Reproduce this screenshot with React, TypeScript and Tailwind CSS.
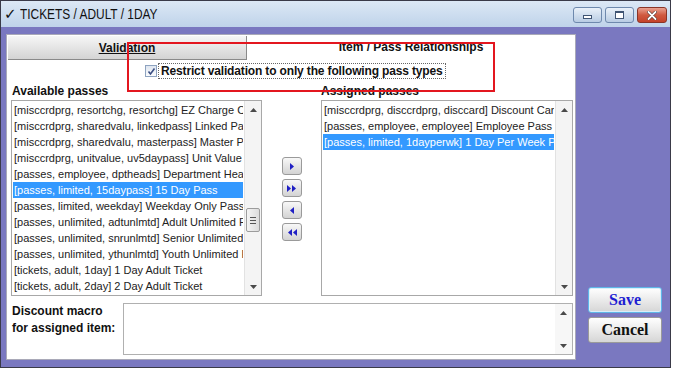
import React from "react";

const leftItems = [
  "[misccrdprg, resortchg, resortchg] EZ Charge Card",
  "[misccrdprg, sharedvalu, linkedpass] Linked Pass",
  "[misccrdprg, sharedvalu, masterpass] Master Pass",
  "[misccrdprg, unitvalue, uv5daypass] Unit Value 5 Day Pass",
  "[passes, employee, dptheads] Department Heads",
  "[passes, limited, 15daypass] 15 Day Pass",
  "[passes, limited, weekday] Weekday Only Pass",
  "[passes, unlimited, adtunlmtd] Adult Unlimited Pass",
  "[passes, unlimited, snrunlmtd] Senior Unlimited Pass",
  "[passes, unlimited, ythunlmtd] Youth Unlimited Pass",
  "[tickets, adult, 1day] 1 Day Adult Ticket",
  "[tickets, adult, 2day] 2 Day Adult Ticket",
];

const rightItems = [
  "[misccrdprg, disccrdprg, disccard] Discount Card",
  "[passes, employee, employee] Employee Pass",
  "[passes, limited, 1dayperwk] 1 Day Per Week Pass",
];

function Tri({ dir, color = "#4a4a4a" }: { dir: "up" | "down"; color?: string }) {
  return (
    <svg width="7" height="4" viewBox="0 0 7 4">
      {dir === "up" ? (
        <path d="M0 4 L3.5 0 L7 4 Z" fill={color} />
      ) : (
        <path d="M0 0 L7 0 L3.5 4 Z" fill={color} />
      )}
    </svg>
  );
}

function Scrollbar({ thumb }: { thumb?: boolean }) {
  return (
    <div className="w-[17px] flex flex-col bg-[#f4f4f4] border-l border-[#e2e2e2]">
      <div className="h-[17px] flex items-center justify-center">
        <Tri dir="up" />
      </div>
      {thumb ? (
        <div className="mt-[90px] mx-[1px] h-[24px] rounded-[2px] border border-[#9c9c9c] bg-linear-to-r from-[#f4f4f4] to-[#dcdcdc] flex flex-col items-center justify-center gap-[2px]">
          <div className="w-[6px] h-px bg-[#555]" />
          <div className="w-[6px] h-px bg-[#555]" />
          <div className="w-[6px] h-px bg-[#555]" />
        </div>
      ) : null}
      <div className="flex-1" />
      <div className="h-[17px] flex items-center justify-center">
        <Tri dir="down" />
      </div>
    </div>
  );
}

function ListBox({
  items,
  selected,
  thumb,
  wide,
}: {
  items: string[];
  selected: number;
  thumb?: boolean;
  wide?: boolean;
}) {
  return (
    <div
      className={
        "h-full flex border border-[#a8a8a8] bg-white " + (wide ? "w-[252px]" : "w-[251px]")
      }
    >
      <div className="flex-1 min-w-0 overflow-hidden pt-px px-px">
        {items.map((t, i) => (
          <div
            key={i}
            className={
              "h-[16px] leading-[16px] pl-px whitespace-nowrap overflow-hidden text-[11px] " +
              (i === selected ? "bg-[#3399ff] text-white" : "text-[#222]")
            }
          >
            {t}
          </div>
        ))}
      </div>
      <Scrollbar thumb={thumb} />
    </div>
  );
}

function ArrowBtn({ kind }: { kind: "r" | "rr" | "l" | "ll" }) {
  const c = "#1f1fc4";
  return (
    <div className="w-[20px] h-[18px] rounded-[3px] border border-[#9a9a9a] bg-linear-to-b from-[#f8f8f8] to-[#d3d3d3] flex items-center justify-center">
      <svg width="10" height="7" viewBox="0 0 10 7">
        {kind === "r" && <path d="M3 0 L7 3.5 L3 7 Z" fill={c} />}
        {kind === "l" && <path d="M7 0 L3 3.5 L7 7 Z" fill={c} />}
        {kind === "rr" && (
          <>
            <path d="M0 0 L4 3.5 L0 7 Z" fill={c} />
            <path d="M5 0 L9 3.5 L5 7 Z" fill={c} />
          </>
        )}
        {kind === "ll" && (
          <>
            <path d="M5 0 L1 3.5 L5 7 Z" fill={c} />
            <path d="M10 0 L6 3.5 L10 7 Z" fill={c} />
          </>
        )}
      </svg>
    </div>
  );
}

export default function App() {
  return (
    <div className="w-[674px] h-[369px] bg-white font-['Liberation_Sans',Arial,sans-serif]">
      <div className="w-[671px] h-[368px] border border-[#3a3a48] flex flex-col">
        {/* Title bar */}
        <div className="h-[26px] bg-linear-to-b from-[#dce8f5] to-[#bfd3ea] flex items-center pl-[3px] pr-[3px]">
          <span className="text-[15px] text-[#111] font-['DejaVu_Sans',sans-serif] leading-none">✓</span>
          <span className="ml-[3px] inline-block origin-left scale-x-[0.85] text-[14px] text-[#111] leading-none whitespace-nowrap">
            TICKETS / ADULT / 1DAY
          </span>
          <div className="flex-1" />
          <div className="flex items-start gap-[3px] self-start mt-[6px]">
            <div className="w-[29px] h-[16px] rounded-[3px] border border-[#6e89ad] bg-linear-to-b from-[#eaf1f9] to-[#b8cce3] flex items-end justify-center pb-[3px]">
              <div className="w-[9px] h-[4px] bg-white border border-[#3f5472]" />
            </div>
            <div className="w-[29px] h-[16px] rounded-[3px] border border-[#6e89ad] bg-linear-to-b from-[#eaf1f9] to-[#b8cce3] flex items-center justify-center">
              <div className="w-[9px] h-[8px] bg-white border border-[#3f5472] border-t-2" />
            </div>
            <div className="w-[30px] h-[16px] rounded-[3px] border border-[#8a3527] bg-linear-to-b from-[#e8a190] via-[#d05a40] to-[#c4432b] flex items-center justify-center">
              <svg width="10" height="9" viewBox="0 0 10 9">
                <path d="M1.5 1 L8.5 8 M8.5 1 L1.5 8" stroke="#3a1a14" strokeWidth="3" strokeLinecap="round" />
                <path d="M1.5 1 L8.5 8 M8.5 1 L1.5 8" stroke="#ffffff" strokeWidth="2" strokeLinecap="round" />
              </svg>
            </div>
          </div>
        </div>

        {/* Body */}
        <div className="flex-1 flex bg-[#7a78c0] pl-[5px] pt-[7px] pb-[7px]">
          {/* Main panel */}
          <div className="relative w-[570px] h-[326px] bg-white border border-[#a9a9b8] flex flex-col pt-px">
            {/* Tabs */}
            <div className="flex h-[24px] ml-px">
              <div className="w-[239px] h-full bg-linear-to-b from-[#f6f6f6] to-[#d4d4d4] border-r border-b border-[#8a8a8a] flex items-center justify-center text-[12px] font-bold underline text-[#111]">
                Validation
              </div>
              <div className="flex-1 flex items-center justify-center pb-[2px] text-[12px] font-bold text-[#111]">
                Item / Pass Relationships
              </div>
            </div>

            {/* Checkbox row */}
            <div className="mt-[3px] h-[16px] flex items-center pl-[138px]">
              <div className="w-[12px] h-[12px] border border-[#8ea3c0] bg-linear-to-b from-[#dfe6f0] to-[#fbfcfd] flex items-center justify-center">
                <svg width="9" height="9" viewBox="0 0 9 9">
                  <path d="M1.5 4.5 L3.5 7 L7.5 1.5" stroke="#3c4f84" strokeWidth="1.6" fill="none" />
                </svg>
              </div>
              <div className="ml-[1px] h-[16px] border border-dotted border-[#666] px-[2px] flex items-center text-[12px] font-bold tracking-[-0.15px] text-[#111] whitespace-nowrap">
                Restrict validation to only the following pass types
              </div>
            </div>

            {/* Headings */}
            <div className="mt-[5px] h-[14px] flex pl-[5px] text-[12px] font-bold leading-[14px] text-[#111]">
              <div className="w-[309px]">Available passes</div>
              <div>Assigned passes</div>
            </div>

            {/* Lists */}
            <div className="mt-[2px] h-[196px] flex pl-[4px]">
              <ListBox items={leftItems} selected={5} thumb />
              <div className="w-[59px] flex flex-col items-center pt-[57px] gap-[4px]">
                <ArrowBtn kind="r" />
                <ArrowBtn kind="rr" />
                <ArrowBtn kind="l" />
                <ArrowBtn kind="ll" />
              </div>
              <ListBox items={rightItems} selected={2} wide />
            </div>

            {/* Discount macro */}
            <div className="mt-[7px] h-[52px] flex pl-[5px]">
              <div className="w-[111px] text-[12px] font-bold leading-[17px] text-[#111]">
                Discount macro
                <br />
                for assigned item:
              </div>
              <div className="w-[450px] h-full flex border border-[#b0b0b0] bg-white">
                <div className="flex-1" />
                <div className="w-[17px] flex flex-col bg-[#f7f7f7]">
                  <div className="h-[17px] flex items-center justify-center">
                    <Tri dir="up" />
                  </div>
                  <div className="flex-1" />
                  <div className="h-[17px] flex items-center justify-center">
                    <Tri dir="down" />
                  </div>
                </div>
              </div>
            </div>

            {/* Red annotation rectangle */}
            <div className="absolute left-[120px] top-[7px] w-[368px] h-[50px] border-2 border-[#e3161f] pointer-events-none" />
          </div>

          {/* Right button column */}
          <div className="flex-1 flex flex-col justify-end pl-[12px] pb-[17px] gap-[4px]">
            <div className="w-[74px] h-[26px] rounded-[3px] border border-[#5fb6e8] shadow-[inset_0_0_0_1px_#d8eefa] bg-linear-to-b from-white to-[#d6d6d6] flex items-center justify-center text-[16px] font-bold text-[#1e1ed2] font-['Liberation_Serif','Times_New_Roman',serif]">
              Save
            </div>
            <div className="w-[74px] h-[26px] rounded-[3px] border border-[#9a9a9a] bg-linear-to-b from-white to-[#d6d6d6] flex items-center justify-center text-[16px] font-bold text-[#111] font-['Liberation_Serif','Times_New_Roman',serif]">
              Cancel
            </div>
          </div>
        </div>
      </div>
    </div>
  );
}
